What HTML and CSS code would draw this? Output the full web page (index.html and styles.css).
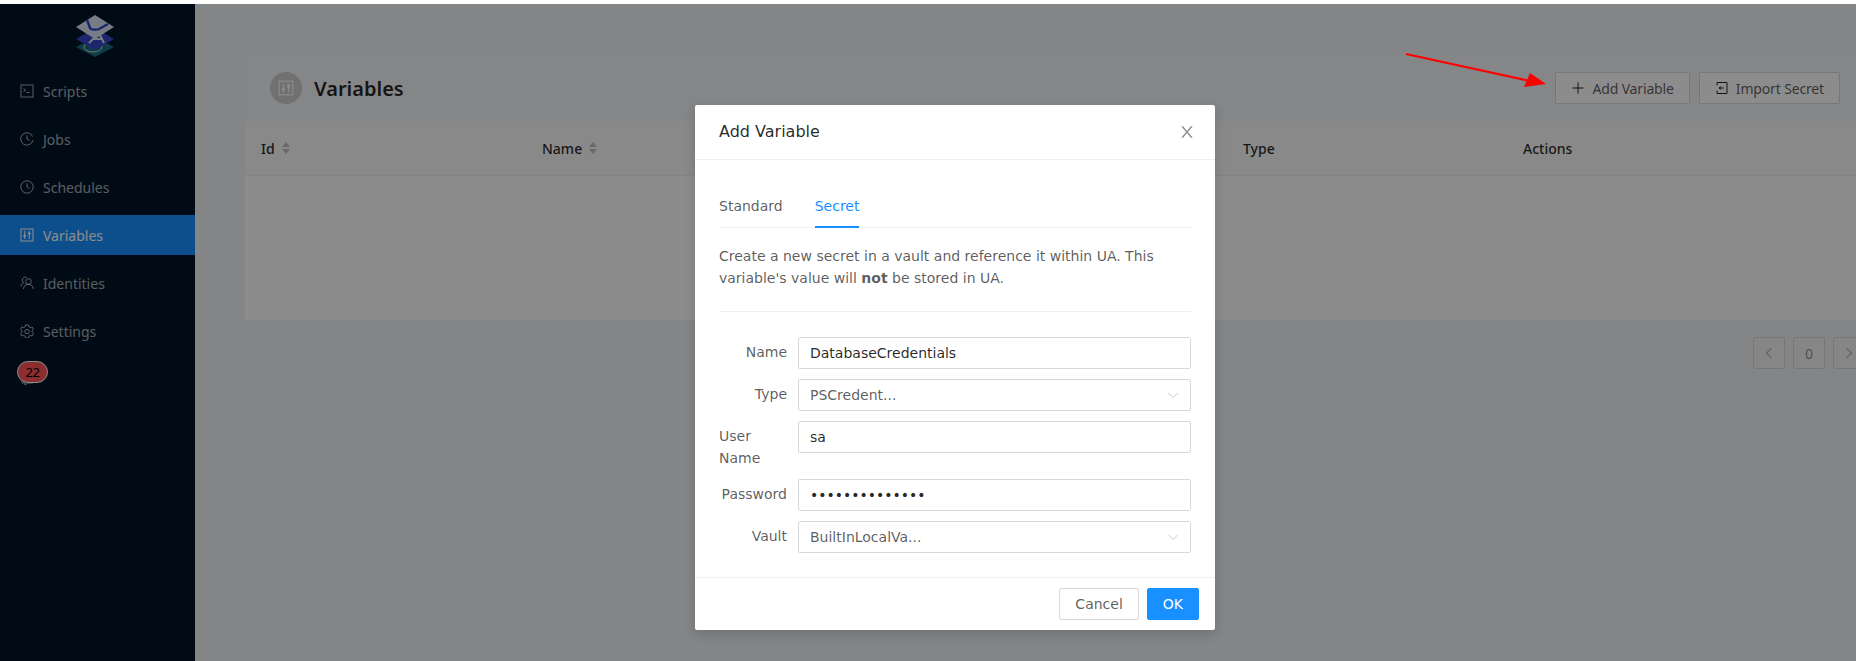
FILE: index.html
```html
<!DOCTYPE html>
<html lang="en">

<head>
    <meta charset="UTF-8">
    <meta name="viewport" content="width=device-width, initial-scale=1.0">
    <title>Variables</title>
    <link rel="stylesheet" href="styles.css">
</head>

<body>
    <div class="top-strip"></div>

    <div class="app">
        <aside class="sidebar">
            <div class="logo">
                <svg width="40" height="42" viewBox="0 0 40 42">
                    <polygon points="20,22 39,32 20,42 1,32" fill="#1b6e7f"/>
                    <ellipse cx="18" cy="32" rx="9" ry="5" fill="none" stroke="#c9d6dc" stroke-width="1"/>
                    <polygon points="20,13 39,24 20,35 1,24" fill="#3646c8"/>
                    <polygon points="20,0 39,12 20,24 1,12" fill="#dbe3f3"/>
                    <path d="M12 5l3 8c1 2 7 2 9 1l9-5" fill="none" stroke="#2a46c8" stroke-width="2.4"/>
                    <path d="M14 28L24 18l5 10M18 24h9" fill="none" stroke="#dbe3f3" stroke-width="2"/>
                </svg>
            </div>
            <nav class="menu">
                <a class="menu-item">
                    <svg class="icon" viewBox="0 0 14 14"><rect x="1" y="1" width="12" height="12"/><path d="M3.5 4.5l2 1.5-2 1.5M6.5 8.5h3"/></svg>
                    Scripts
                </a>
                <a class="menu-item">
                    <svg class="icon" viewBox="0 0 14 14"><path d="M12.6 4.5A6.2 6.2 0 1 0 13 8"/><path d="M7 3.5V7l2.5 1.5"/></svg>
                    Jobs
                </a>
                <a class="menu-item">
                    <svg class="icon" viewBox="0 0 14 14"><circle cx="7" cy="7" r="6.2"/><path d="M7 3.5V7l2.5 1.5"/></svg>
                    Schedules
                </a>
                <a class="menu-item active">
                    <svg class="icon" viewBox="0 0 14 14"><rect x="1" y="1" width="12" height="12"/><path d="M4.7 3v8M9.3 3v8"/><circle cx="4.7" cy="8" r="1" fill="currentColor"/><circle cx="9.3" cy="5.5" r="1" fill="currentColor"/></svg>
                    Variables
                </a>
                <a class="menu-item">
                    <svg class="icon" viewBox="0 0 14 14"><circle cx="8.5" cy="5.5" r="2.8"/><path d="M3.5 13c.3-3 2.2-4.6 5-4.6s4.5 1.6 5 4.6"/><path d="M6.8 1.5A2.9 2.9 0 0 0 3.8 6.7C2 7.5 1 9 .8 10.5"/></svg>
                    Identities
                </a>
                <a class="menu-item">
                    <svg class="icon" viewBox="0 0 14 14"><path d="M5.6 .9h2.8l.4 1.8 1.5.9 1.8-.6 1.3 2.4-1.3 1.2v1.8l1.3 1.2-1.3 2.4-1.8-.6-1.5.9-.4 1.8H5.6l-.4-1.8-1.5-.9-1.8.6L.6 9.6l1.3-1.2V6.600L.6 5.400l1.300-2.400 1.800.6 1.500-.9z"/><circle cx="7" cy="7.500" r="2.200"/></svg>
                    Settings
                </a>
            </nav>
            <div class="badge-wrap">
                <svg class="badge-tail" width="14" height="8" viewBox="0 0 14 8"><path d="M1 1v3h3v2l3-2h5"/></svg>
                <span class="badge">22</span>
            </div>
        </aside>

        <main class="content">
            <section class="card">
                <header class="page-head">
                    <span class="avatar">
                        <svg class="icon" viewBox="0 0 14 14"><rect x="1" y="1" width="12" height="12"/><path d="M4.7 3v8M9.3 3v8"/><circle cx="4.7" cy="8" r="1" fill="currentColor"/><circle cx="9.3" cy="5.5" r="1" fill="currentColor"/></svg>
                    </span>
                    <h1 class="page-title">Variables</h1>
                    <div class="page-actions">
                        <button class="btn" type="button">
                            <svg class="icon" viewBox="0 0 14 14"><path d="M7 1.5v11M1.5 7h11"/></svg>
                            Add Variable
                        </button>
                        <button class="btn" type="button">
                            <svg class="icon" viewBox="0 0 14 14"><path d="M2 1.5h10v11H2M2 1.5v3M2 9.5v3M4 7h5M4 7l2-1.5M4 7l2 1.5"/></svg>
                            Import Secret
                        </button>
                    </div>
                </header>
                <div class="table-head">
                    <div class="th">Id <span class="sorter"><i class="up"></i><i class="down"></i></span></div>
                    <div class="th">Name <span class="sorter"><i class="up"></i><i class="down"></i></span></div>
                    <div class="th">Type</div>
                    <div class="th">Actions</div>
                </div>
                <div class="table-body"></div>
            </section>
            <div class="pager">
                <span class="page-btn"><svg class="icon" viewBox="0 0 14 14"><path d="M9.5 2L4.5 7l5 5"/></svg></span>
                <span class="page-btn">0</span>
                <span class="page-btn"><svg class="icon" viewBox="0 0 14 14"><path d="M4.5 2l5 5-5 5"/></svg></span>
            </div>
        </main>

        <div class="mask"></div>

        <svg class="arrow" width="150" height="40" viewBox="0 0 150 40">
            <path d="M1 1L125 28" stroke="#f00" stroke-width="2" fill="none"/>
            <polygon points="141,31 119,34 125,20" fill="#f00"/>
        </svg>

        <div class="modal">
            <div class="modal-head">
                <div class="modal-title">Add Variable</div>
                <svg class="modal-close" viewBox="64 64 896 896"><path d="M563.8 512l262.5-312.9c4.4-5.2.7-13.1-6.1-13.1h-79.8c-4.7 0-9.2 2.1-12.3 5.7L511.6 449.8 295.1 191.7c-3-3.6-7.5-5.7-12.3-5.7H203c-6.8 0-10.5 7.9-6.1 13.1L459.4 512 196.9 824.9A7.95 7.95 0 00203 838h79.8c4.7 0 9.2-2.1 12.3-5.7l216.5-258.1 216.5 258.1c3 3.6 7.5 5.7 12.3 5.7h79.8c6.8 0 10.5-7.9 6.1-13.1L563.8 512z"/></svg>
            </div>
            <div class="modal-body">
                <div class="tabs">
                    <span class="tab">Standard</span>
                    <span class="tab tab-active">Secret</span>
                </div>
                <p class="hint">Create a new secret in a vault and reference it within UA. This variable's value will <b>not</b> be stored in UA.</p>
                <hr class="divider">
                <form class="form">
                    <div class="row">
                        <label class="label">Name</label>
                        <div class="field value">DatabaseCredentials</div>
                    </div>
                    <div class="row">
                        <label class="label">Type</label>
                        <div class="field select">PSCredent...<svg class="chevron" viewBox="0 0 14 14"><path d="M1.5 4.5L7 10l5.5-5.5"/></svg></div>
                    </div>
                    <div class="row">
                        <label class="label label-wrap">User Name</label>
                        <div class="field value">sa</div>
                    </div>
                    <div class="row">
                        <label class="label">Password</label>
                        <div class="field value">••••••••••••••</div>
                    </div>
                    <div class="row">
                        <label class="label">Vault</label>
                        <div class="field select">BuiltInLocalVa...<svg class="chevron" viewBox="0 0 14 14"><path d="M1.5 4.5L7 10l5.5-5.5"/></svg></div>
                    </div>
                </form>
            </div>
            <div class="modal-foot">
                <button class="modal-btn" type="button">Cancel</button>
                <button class="modal-btn primary" type="button">OK</button>
            </div>
        </div>
    </div>
</body>

</html>
```

FILE: styles.css
```css
* {
    box-sizing: border-box;
}

html,
body {
    height: 100%;
}

body {
    margin: 0;
    font-family: 'Noto Sans', sans-serif;
    font-size: 14px;
    color: rgba(0, 0, 0, 0.85);
    background-color: #fff;
    overflow: hidden;
}

.top-strip {
    height: 4px;
    background-color: #fff;
}

.app {
    position: relative;
    display: flex;
    height: 657px;
    overflow: hidden;
    background-color: #f0f2f5;
}

.icon {
    width: 14px;
    height: 14px;
    flex: none;
    fill: none;
    stroke: currentColor;
    stroke-width: 1;
}

/* sidebar */
.sidebar {
    width: 195px;
    flex: none;
    background-color: #001529;
    color: rgba(255, 255, 255, 0.65);
}

.logo {
    display: flex;
    justify-content: center;
    padding: 11px 5px 0 0;
    height: 64px;
}

.menu {
    display: flex;
    flex-direction: column;
    gap: 8px;
    padding-top: 3px;
}

.menu-item {
    display: flex;
    align-items: center;
    gap: 9px;
    height: 40px;
    padding-left: 20px;
}

.menu-item.active {
    background-color: #1890ff;
    color: #fff;
}

.badge-wrap {
    position: relative;
    margin: 10px 0 0 17px;
    height: 30px;
}

.badge {
    position: relative;
    display: block;
    width: 31px;
    height: 22px;
    line-height: 20px;
    text-align: center;
    font-size: 13px;
    letter-spacing: -0.5px;
    color: #000;
    background-color: #ff5257;
    border: 1px solid #fff;
    border-radius: 11px;
}

.badge-tail {
    position: absolute;
    left: 4px;
    top: 18px;
    fill: none;
    stroke: rgba(255, 255, 255, 0.65);
}

/* main */
.content {
    flex: 1;
    min-width: 0;
    padding: 51px 0 0 50px;
}

.card {
    background-color: #fff;
}

.page-head {
    display: flex;
    align-items: center;
    height: 66px;
    padding: 0 16px 0 25px;
    background-color: #f3f4f6;
}

.avatar {
    display: flex;
    align-items: center;
    justify-content: center;
    width: 32px;
    height: 32px;
    margin-right: 12px;
    border-radius: 50%;
    color: #fff;
    background-color: #ccc;
}

.avatar .icon {
    width: 16px;
    height: 16px;
}

.page-title {
    margin: 2px 0 0;
    font-size: 20px;
    font-weight: 600;
    line-height: 32px;
}

.page-actions {
    display: flex;
    gap: 9px;
    margin-left: auto;
}

.btn {
    display: flex;
    align-items: center;
    gap: 7px;
    height: 32px;
    padding: 0 15px;
    font-family: inherit;
    font-size: 14px;
    letter-spacing: -0.15px;
    color: rgba(0, 0, 0, 0.65);
    background-color: #fff;
    border: 1px solid #d9d9d9;
    border-radius: 2px;
}

.btn .icon {
    color: rgba(0, 0, 0, 0.85);
}

.table-head {
    display: grid;
    grid-template-columns: 281px 701px 280px 1fr;
    height: 55px;
    background-color: #fafafa;
    border-bottom: 1px solid #f0f0f0;
}

.th {
    display: flex;
    align-items: center;
    gap: 7px;
    padding-left: 16px;
    font-weight: 500;
}

.sorter {
    display: flex;
    flex-direction: column;
    gap: 2px;
}

.sorter i {
    display: block;
    width: 0;
    height: 0;
    border-left: 4px solid transparent;
    border-right: 4px solid transparent;
}

.sorter .up {
    border-bottom: 5px solid #bfbfbf;
}

.sorter .down {
    border-top: 5px solid #bfbfbf;
}

.table-body {
    height: 144px;
}

.pager {
    display: flex;
    justify-content: flex-end;
    gap: 8px;
    margin: 17px -9px 0 0;
}

.page-btn {
    display: flex;
    align-items: center;
    justify-content: center;
    width: 32px;
    height: 32px;
    color: rgba(0, 0, 0, 0.45);
    background-color: #f5f5f5;
    border: 1px solid #d9d9d9;
    border-radius: 2px;
}

/* modal */
.mask {
    position: absolute;
    inset: 0;
    background-color: rgba(0, 0, 0, 0.45);
}

.arrow {
    position: absolute;
    left: 1405px;
    top: 49px;
}

.modal {
    position: absolute;
    left: 695px;
    top: 101px;
    width: 520px;
    font-family: 'DejaVu Sans', sans-serif;
    background-color: #fff;
    border-radius: 2px;
    box-shadow: 0 4px 12px rgba(0, 0, 0, 0.15);
}

.modal-head {
    display: flex;
    justify-content: space-between;
    align-items: center;
    padding: 16px 24px;
    border-bottom: 1px solid #f0f0f0;
}

.modal-title {
    font-size: 16px;
    line-height: 22px;
}

.modal-close {
    width: 16px;
    height: 16px;
    margin-right: -4px;
    fill: rgba(0, 0, 0, 0.45);
}

.modal-body {
    padding: 24px;
}

.tabs {
    display: flex;
    gap: 32px;
    margin-bottom: 17px;
    border-bottom: 1px solid #f0f0f0;
}

.tab {
    padding: 11px 0;
    line-height: 22px;
    margin-bottom: -1px;
    color: rgba(0, 0, 0, 0.65);
}

.tab-active {
    padding-bottom: 9px;
    color: #1890ff;
    border-bottom: 2px solid #1890ff;
}

.hint {
    margin: 0;
    line-height: 22px;
    color: rgba(0, 0, 0, 0.65);
}

.divider {
    margin: 22px 0 25px;
    border: 0;
    border-top: 1px solid #f0f0f0;
}

.form {
    display: flex;
    flex-direction: column;
    gap: 10px;
}

.row {
    display: grid;
    grid-template-columns: 79px 1fr;
    align-items: start;
}

.label {
    padding: 4px 11px 0 0;
    line-height: 22px;
    text-align: right;
    color: rgba(0, 0, 0, 0.65);
}

.label-wrap {
    padding-right: 32px;
    text-align: left;
}

.field {
    display: flex;
    align-items: center;
    justify-content: space-between;
    height: 32px;
    padding: 0 11px;
    border: 1px solid #d9d9d9;
    border-radius: 2px;
}

.value {
    color: rgba(0, 0, 0, 0.85);
}

.select {
    color: rgba(0, 0, 0, 0.65);
}

.chevron {
    width: 12px;
    height: 12px;
    fill: none;
    stroke: #bfbfbf;
    stroke-width: 1;
}

.modal-foot {
    display: flex;
    justify-content: flex-end;
    gap: 8px;
    padding: 10px 16px;
    border-top: 1px solid #f0f0f0;
}

.modal-btn {
    height: 32px;
    padding: 0 15px;
    font-family: inherit;
    font-size: 14px;
    color: rgba(0, 0, 0, 0.65);
    background-color: #fff;
    border: 1px solid #d9d9d9;
    border-radius: 2px;
}

.modal-btn.primary {
    color: #fff;
    background-color: #1890ff;
    border-color: #1890ff;
}
```
